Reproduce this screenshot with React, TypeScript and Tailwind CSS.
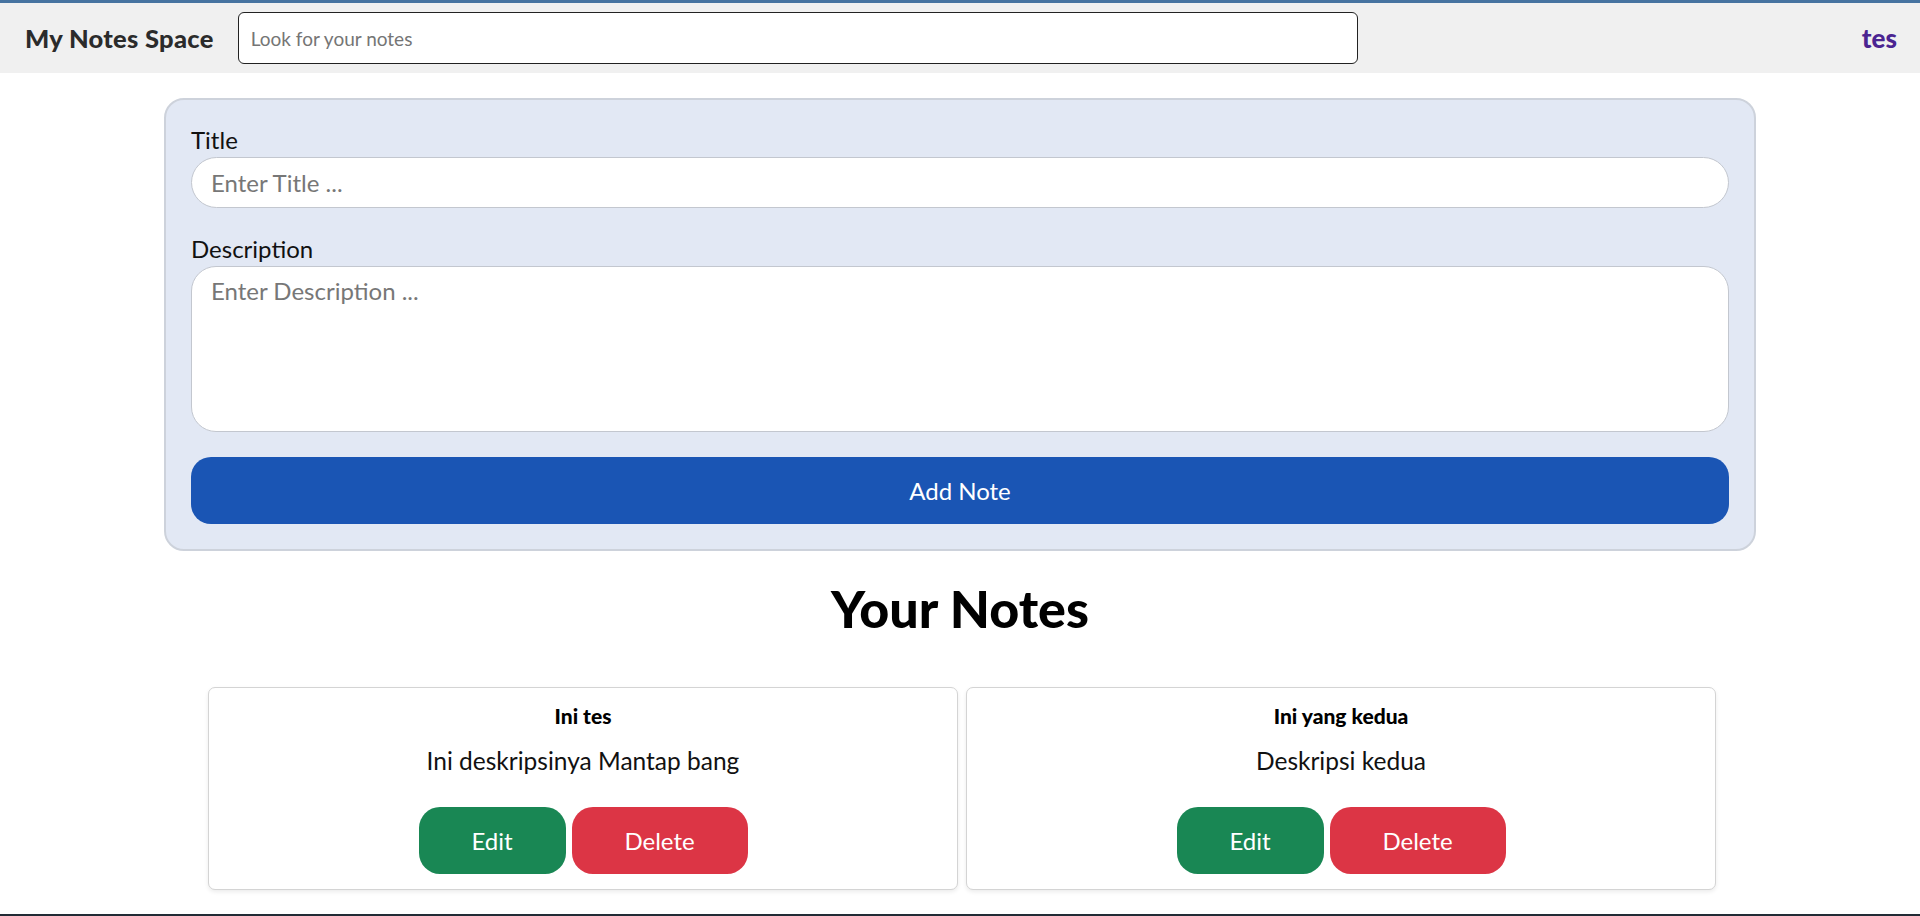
import { useState } from 'react'

type Note = { id: number; title: string; description: string }

const initialNotes: Note[] = [
  { id: 1, title: 'Ini tes', description: 'Ini deskripsinya Mantap bang' },
  { id: 2, title: 'Ini yang kedua', description: 'Deskripsi kedua' },
]

const NoteCard = ({ note }: { note: Note }) => (
  <div className="w-[750px] bg-white border border-[#d4d4d4] rounded-[7px] shadow-[0_2px_4px_rgba(0,0,0,0.08)] pt-[14px] pb-[15px] flex flex-col items-center">
    <h5 className="text-[21px] leading-[28px] font-black text-black">{note.title}</h5>
    <p className="mt-[13px] text-[24.5px] leading-[36px] text-[#111]">{note.description}</p>
    <div className="mt-[28px] flex gap-[6px]">
      <button className="w-[147px] h-[67px] rounded-[21px] bg-[#198754] text-white text-[24px]">Edit</button>
      <button className="w-[176px] h-[67px] rounded-[21px] bg-[#dc3545] text-white text-[24px]">Delete</button>
    </div>
  </div>
)

export default function App() {
  const [notes] = useState<Note[]>(initialNotes)

  return (
    <div
      className="h-[916px] overflow-hidden bg-white border-t-[3px] border-t-[#4673a0] border-b-2 border-b-[#222b35] flex flex-col"
      style={{ fontFamily: 'Lato, "Noto Sans", sans-serif' }}
    >
      <nav className="h-[70px] shrink-0 bg-[#f0f0f0] flex items-center pl-[25px] pr-[23px]">
        <span className="text-[25.5px] font-black text-[#2b2b2b] tracking-[0.3px]">My Notes Space</span>
        <input
          className="ml-[24px] w-[1120px] h-[52px] bg-white border border-[#222] rounded-[6px] px-[12px] text-[19px] placeholder:text-[#757575] outline-none"
          placeholder="Look for your notes"
        />
        <span className="ml-auto text-[26px] font-black text-[#4b2491]">tes</span>
      </nav>

      <div className="w-[1592px] mx-auto mt-[25px] bg-[#e2e8f4] border-2 border-[#cdd2db] rounded-[20px] px-[25px] pt-[22px] pb-[25px]">
        <label className="block text-[24px] leading-[35px] text-[#111]">Title</label>
        <input
          className="block w-full h-[51px] bg-white border border-[#c3c7cf] rounded-full px-[19px] text-[24px] placeholder:text-[#777] outline-none"
          placeholder="Enter Title ..."
        />
        <label className="block mt-[23px] text-[24px] leading-[35px] text-[#111]">Description</label>
        <textarea
          className="block w-full h-[166px] bg-white border border-[#c3c7cf] rounded-[25px] px-[19px] py-[6px] text-[24px] placeholder:text-[#777] outline-none resize-none"
          placeholder="Enter Description ..."
        />
        <button className="mt-[25px] w-full h-[67px] bg-[#1a55b4] rounded-[20px] text-white text-[24px]">Add Note</button>
      </div>

      <h1 className="mt-[30px] text-center text-[52px] leading-[54px] font-black text-black">Your Notes</h1>

      <div className="mt-[52px] flex justify-center gap-[8px] pl-[4px]">
        {notes.map((n) => (
          <NoteCard key={n.id} note={n} />
        ))}
      </div>
    </div>
  )
}
